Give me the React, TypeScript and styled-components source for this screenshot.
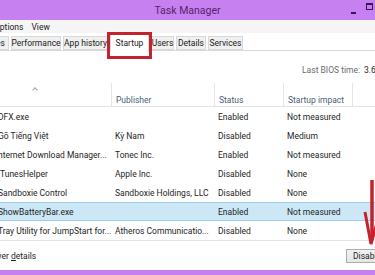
import React from "react";
import styled, { createGlobalStyle } from "styled-components";

const GlobalStyle = createGlobalStyle`
  html, body {
    margin: 0;
    padding: 0;
    background: #fff;
  }
  body {
    font-family: Roboto, "Liberation Sans", "Noto Sans", sans-serif;
    font-size: 8.5px;
    color: #1e1e1e;
  }
`;

const Window = styled.div`
  width: 375px;
  height: 275px;
  overflow: hidden;
  position: relative;
  display: flex;
  flex-direction: column;
  background: #fff;
`;

const TitleBar = styled.div`
  height: 20px;
  flex: none;
  background: #c680f0;
  display: grid;
  grid-template-columns: 1fr auto 1fr;
  align-items: center;
`;

const Title = styled.div`
  grid-column: 2;
  font-size: 10.5px;
  color: #54246f;
`;

const Controls = styled.div`
  justify-self: end;
  display: flex;
  align-items: center;
  gap: 10px;
  margin-right: 2px;
  height: 20px;
`;

const MinBtn = styled.span`
  width: 5px;
  height: 2px;
  background: #3d1357;
  margin-top: 5px;
`;

const MaxBtn = styled.span`
  width: 5px;
  height: 4px;
  border: 1px solid #3d1357;
  border-top-width: 2px;
  margin-top: -8px;
`;

const MenuBar = styled.div`
  height: 13px;
  flex: none;
  background: #f5f5f5;
  display: flex;
  align-items: center;
  gap: 8px;
  color: #222;
`;

const MenuItem = styled.span<{ $shift?: number }>`
  margin-left: ${(p) => p.$shift ?? 0}px;
`;

const TabStrip = styled.div`
  height: 17px;
  flex: none;
  display: flex;
  align-items: flex-end;
  gap: 2px;
  background: #fff;
  border-bottom: 1px solid #d9d9d9;
`;

const Tab = styled.div<{ $w: number; $active?: boolean; $shift?: number }>`
  position: relative;
  flex: none;
  width: ${(p) => p.$w}px;
  height: ${(p) => (p.$active ? 17 : 14)}px;
  margin-left: ${(p) => p.$shift ?? 0}px;
  margin-bottom: ${(p) => (p.$active ? -1 : 0)}px;
  box-sizing: border-box;
  background: ${(p) => (p.$active ? "#fff" : "#f0f0f0")};
  border: 1px solid #d9d9d9;
  border-bottom: ${(p) => (p.$active ? "none" : "1px solid #d9d9d9")};
  display: flex;
  align-items: center;
  justify-content: center;
  color: #222;
  white-space: nowrap;
  z-index: ${(p) => (p.$active ? 2 : 1)};
`;

const Callout = styled.span`
  position: absolute;
  left: -4px;
  right: -4px;
  top: -3px;
  bottom: -8px;
  border: 3px solid #c3232c;
  pointer-events: none;
`;

const Content = styled.div`
  flex: 1;
  display: flex;
  flex-direction: column;
  min-height: 0;
`;

const BiosRow = styled.div`
  height: 32px;
  flex: none;
  display: flex;
  align-items: center;
  justify-content: flex-end;
  margin-right: -35px;
  padding-top: 6px;
  box-sizing: border-box;
  color: #6b6b6b;
  white-space: nowrap;
`;

const BiosValue = styled.span`
  color: #2a2a2a;
  margin-left: 4px;
`;

const cols = "111px 103px 69px 69px 1fr";

const Header = styled.div`
  display: grid;
  grid-template-columns: ${cols};
  height: 24px;
  flex: none;
  border-bottom: 1px solid #e3e3e3;
  box-sizing: border-box;
`;

const HeadCell = styled.div<{ $divider?: boolean }>`
  position: relative;
  border-left: ${(p) => (p.$divider ? "1px solid #e5e5e5" : "none")};
  padding: 0 4px 1px;
  display: flex;
  align-items: flex-end;
  color: #4c607a;
  white-space: nowrap;
`;

const SortCaret = styled.span`
  position: absolute;
  left: 33px;
  top: 5px;
  width: 3px;
  height: 3px;
  border-left: 1px solid #9aa3ae;
  border-top: 1px solid #9aa3ae;
  transform: rotate(45deg);
`;

const List = styled.div`
  display: flex;
  flex-direction: column;
  border-bottom: 1px solid #e3e3e3;
  flex: none;
`;

const Row = styled.div<{ $selected?: boolean }>`
  display: grid;
  grid-template-columns: ${cols};
  height: 19px;
  box-sizing: border-box;
  align-items: center;
  background: ${(p) => (p.$selected ? "#cce8f7" : "transparent")};
  border-top: 1px solid ${(p) => (p.$selected ? "#9ccfe9" : "transparent")};
  border-bottom: 1px solid ${(p) => (p.$selected ? "#9ccfe9" : "transparent")};
`;

const Cell = styled.div<{ $first?: boolean }>`
  padding-left: ${(p) => (p.$first ? 0 : 4)}px;
  margin-left: ${(p) => (p.$first ? -2 : 0)}px;
  white-space: nowrap;
  overflow: hidden;
  color: #1e1e1e;
`;

const Footer = styled.div`
  flex: 1;
  display: flex;
  align-items: center;
  justify-content: space-between;
`;

const Fewer = styled.div`
  display: flex;
  align-items: center;
  gap: 4px;
  margin-left: -32px;
  color: #1e1e1e;
  white-space: nowrap;
`;

const Chevron = styled.span`
  width: 12px;
  height: 12px;
  border-radius: 50%;
  border: 1px solid #9aa;
`;

const DisableButton = styled.div`
  width: 72px;
  height: 14px;
  margin-right: -43px;
  box-sizing: border-box;
  border: 1px solid #adadad;
  background: linear-gradient(#f2f2f2, #e4e4e4);
  display: flex;
  align-items: center;
  padding-left: 6px;
  color: #1e1e1e;
`;

const BottomFrame = styled.div`
  height: 5px;
  flex: none;
  background: #c680f0;
`;

const Arrow = styled.svg`
  position: absolute;
  right: 0;
  top: 180px;
  width: 20px;
  height: 72px;
  pointer-events: none;
`;

const rows = [
  { name: "DFX.exe", pub: "", status: "Enabled", impact: "Not measured" },
  { name: "Gõ Tiếng Việt", pub: "Kỳ Nam", status: "Disabled", impact: "Medium" },
  { name: "nternet Download Manager...", pub: "Tonec Inc.", status: "Enabled", impact: "Not measured" },
  { name: "iTunesHelper", pub: "Apple Inc.", status: "Disabled", impact: "None" },
  { name: "Sandboxie Control", pub: "Sandboxie Holdings, LLC", status: "Disabled", impact: "None" },
  { name: "ShowBatteryBar.exe", pub: "", status: "Enabled", impact: "Not measured", selected: true },
  { name: "Tray Utility for JumpStart for...", pub: "Atheros Communicatio...", status: "Disabled", impact: "None" },
];

const tabs = [
  { label: "Processes", w: 48, shift: -39 },
  { label: "Performance", w: 50 },
  { label: "App history", w: 45 },
  { label: "Startup", w: 39, active: true },
  { label: "Users", w: 23 },
  { label: "Details", w: 30 },
  { label: "Services", w: 35 },
];

export default function App() {
  return (
    <>
      <GlobalStyle />
      <Window>
        <TitleBar>
          <Title>Task Manager</Title>
          <Controls>
            <MinBtn />
            <MaxBtn />
          </Controls>
        </TitleBar>
        <MenuBar>
          <MenuItem $shift={-6}>Options</MenuItem>
          <MenuItem>View</MenuItem>
        </MenuBar>
        <TabStrip>
          {tabs.map((t) => (
            <Tab key={t.label} $w={t.w} $active={t.active} $shift={t.shift}>
              {t.label}
              {t.active && <Callout />}
            </Tab>
          ))}
        </TabStrip>
        <Content>
          <BiosRow>
            Last BIOS time: <BiosValue>3.6 seconds</BiosValue>
          </BiosRow>
          <Header>
            <HeadCell>
              <SortCaret />
            </HeadCell>
            <HeadCell $divider>Publisher</HeadCell>
            <HeadCell $divider>Status</HeadCell>
            <HeadCell $divider>Startup impact</HeadCell>
            <HeadCell $divider />
          </Header>
          <List>
            {rows.map((r) => (
              <Row key={r.name} $selected={r.selected}>
                <Cell $first>{r.name}</Cell>
                <Cell>{r.pub}</Cell>
                <Cell>{r.status}</Cell>
                <Cell>{r.impact}</Cell>
                <Cell />
              </Row>
            ))}
          </List>
          <Footer>
            <Fewer>
              <Chevron />
              <span>
                Fewer <u>d</u>etails
              </span>
            </Fewer>
            <DisableButton>Disable</DisableButton>
          </Footer>
        </Content>
        <BottomFrame />
        <Arrow viewBox="0 0 20 72">
          <path d="M17 0 L17 60" stroke="#c3232c" strokeWidth="3.5" fill="none" />
          <path d="M10 32 L16 64 L25 32" stroke="#c3232c" strokeWidth="3" fill="none" />
        </Arrow>
      </Window>
    </>
  );
}
